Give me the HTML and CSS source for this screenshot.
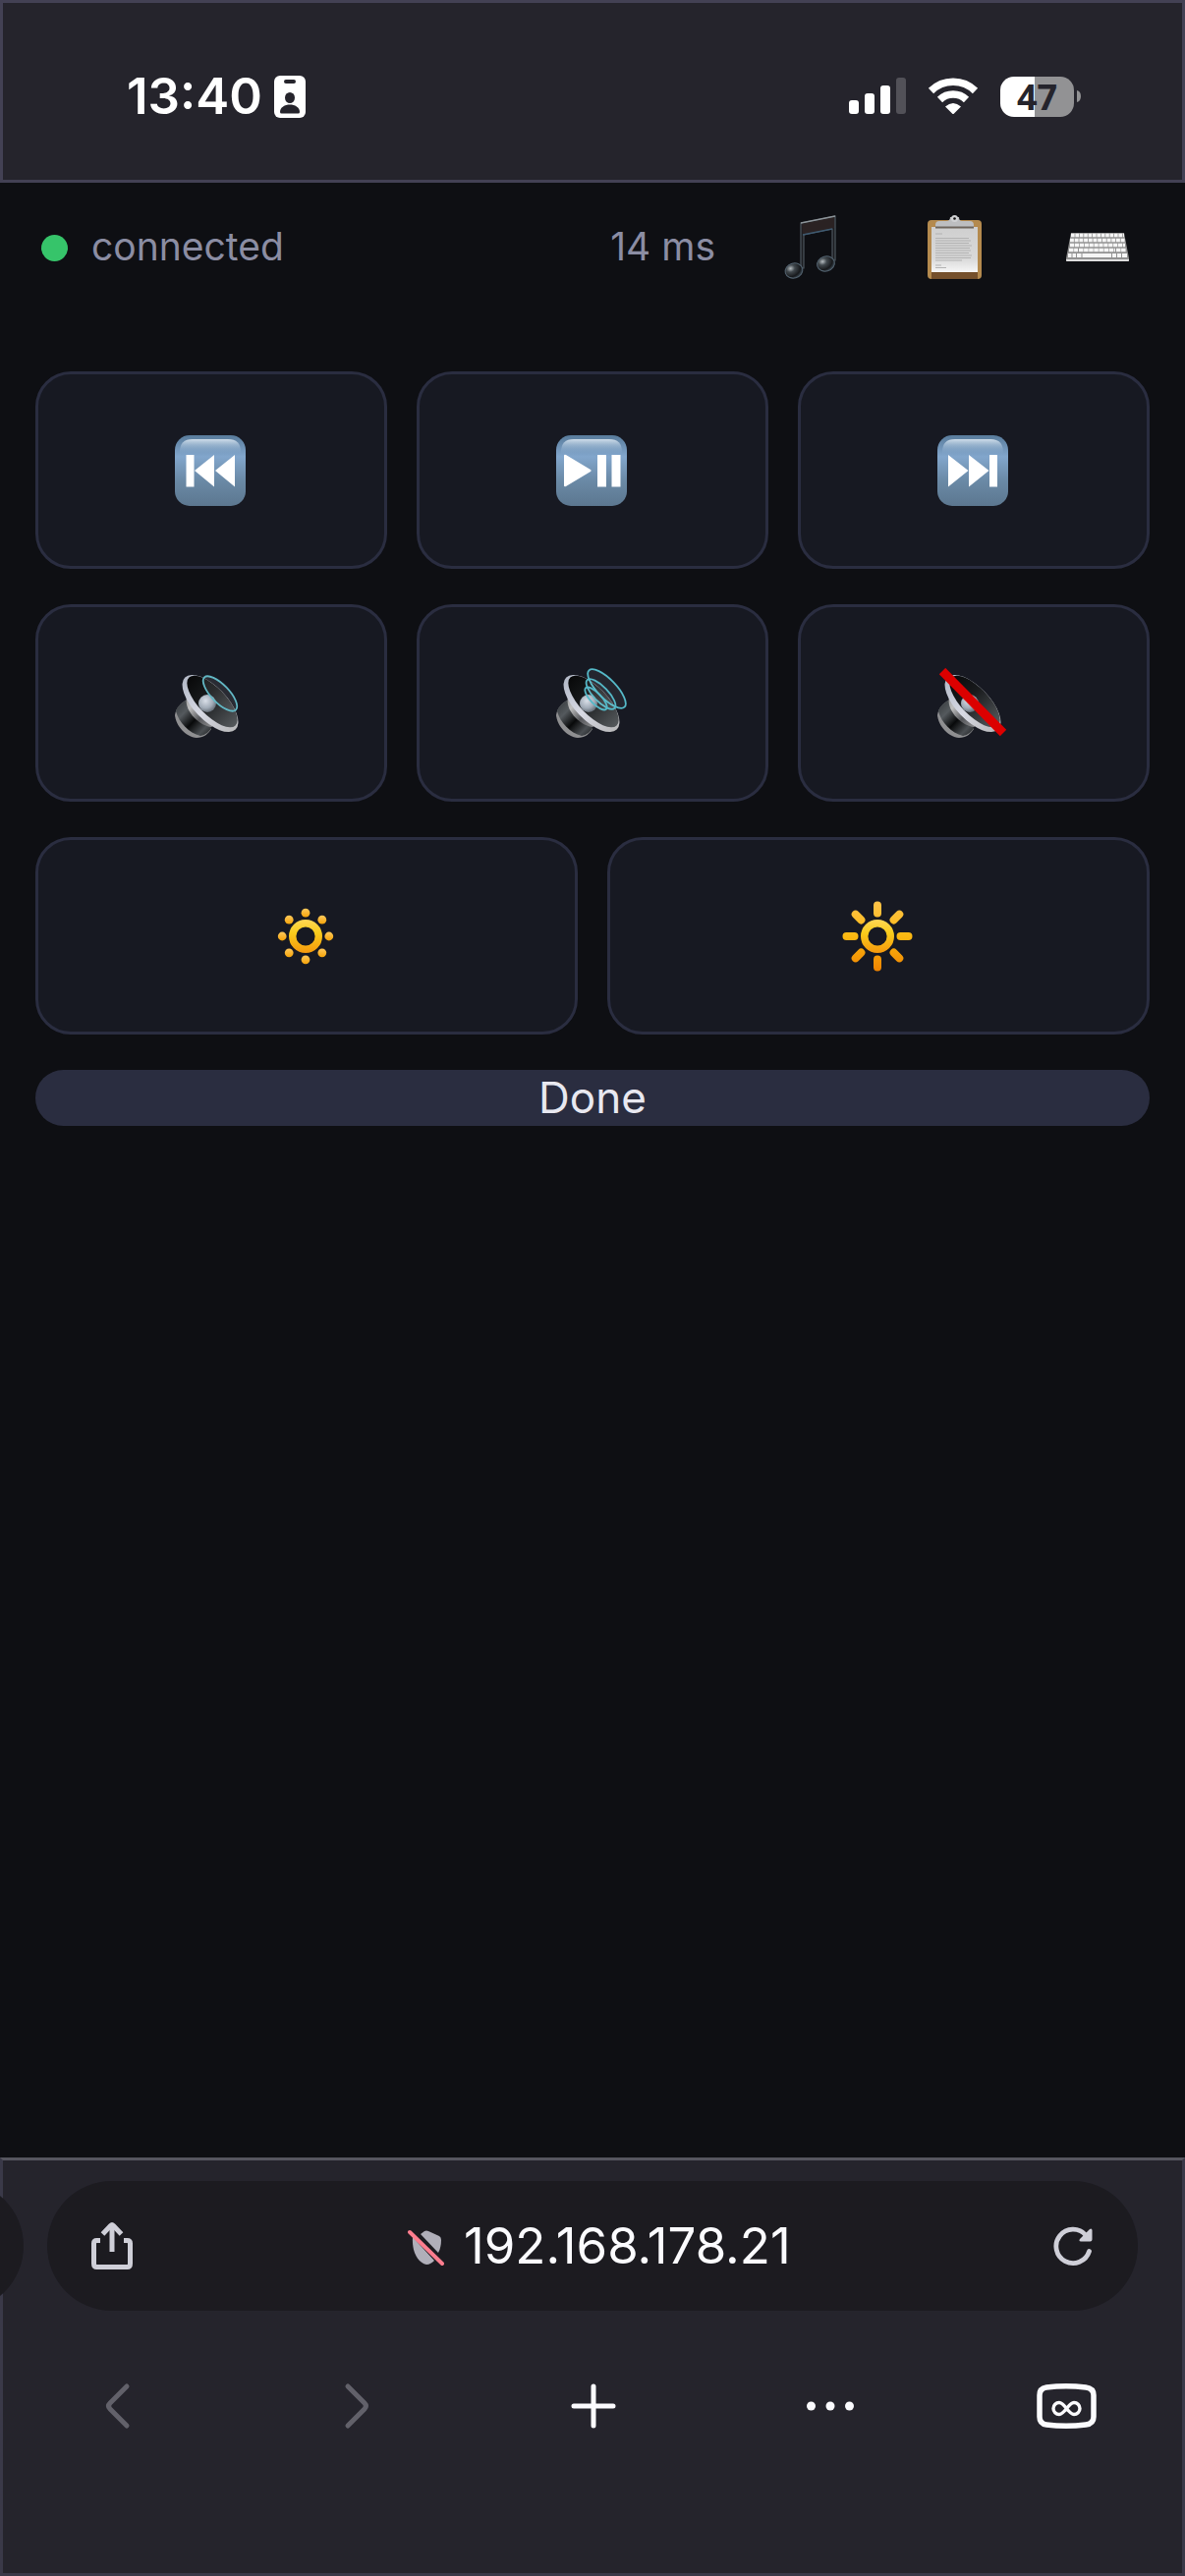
FILE: index.html
```
<!DOCTYPE html>
<html lang="en">
<head>
<meta charset="UTF-8">
<meta name="viewport" content="width=device-width, initial-scale=1.0">
<title>Remote</title>
<link rel="stylesheet" href="styles.css">
</head>
<body>
  <!-- Shared gradients and shapes -->
  <svg class="defs" width="0" height="0" aria-hidden="true">
    <defs>
      <linearGradient id="key" x1="0" y1="0" x2="0" y2="1">
        <stop offset="0" stop-color="#587b9b"/>
        <stop offset=".3" stop-color="#82a6cc"/>
        <stop offset=".65" stop-color="#6a89a5"/>
        <stop offset="1" stop-color="#5c7790"/>
      </linearGradient>
      <linearGradient id="shine" x1="0" y1="0" x2="0" y2="1">
        <stop offset="0" stop-color="#d0deea"/>
        <stop offset="1" stop-color="#82a6cc" stop-opacity="0"/>
      </linearGradient>
      <linearGradient id="rim" x1="0" y1="0" x2="1" y2="0">
        <stop offset="0" stop-color="#b4bac8"/>
        <stop offset=".5" stop-color="#d8dae4"/>
        <stop offset="1" stop-color="#b9b9bb"/>
      </linearGradient>
      <linearGradient id="cone" x1="0" y1="0" x2="1" y2="0">
        <stop offset="0" stop-color="#08090a"/>
        <stop offset=".4" stop-color="#191b1d"/>
        <stop offset="1" stop-color="#55595c"/>
      </linearGradient>
      <linearGradient id="magnet" x1="0" y1="0" x2="1" y2="1">
        <stop offset="0" stop-color="#33373a"/>
        <stop offset=".3" stop-color="#54595d"/>
        <stop offset=".55" stop-color="#08090a"/>
        <stop offset=".8" stop-color="#4a4e52"/>
        <stop offset="1" stop-color="#202224"/>
      </linearGradient>
      <linearGradient id="neck" x1="0" y1="0" x2="1" y2="1">
        <stop offset="0" stop-color="#8a8a8c"/>
        <stop offset=".3" stop-color="#c0c0c0"/>
        <stop offset=".6" stop-color="#55565a"/>
        <stop offset="1" stop-color="#a0a0a2"/>
      </linearGradient>
      <radialGradient id="dome" cx=".4" cy=".35" r=".7">
        <stop offset="0" stop-color="#d9dfe8"/>
        <stop offset=".6" stop-color="#a0aab6"/>
        <stop offset="1" stop-color="#5b636c"/>
      </radialGradient>
      <linearGradient id="sun" gradientUnits="userSpaceOnUse" x1="0" y1="18" x2="0" y2="54">
        <stop offset="0" stop-color="#ffd85a"/>
        <stop offset=".4" stop-color="#f9cc1c"/>
        <stop offset="1" stop-color="#f5960c"/>
      </linearGradient>
      <linearGradient id="ray" gradientUnits="userSpaceOnUse" x1="0" y1="0" x2="0" y2="72">
        <stop offset="0" stop-color="#ffc34a"/>
        <stop offset=".5" stop-color="#fbb911"/>
        <stop offset="1" stop-color="#ef8200"/>
      </linearGradient>
      <linearGradient id="spark" x1="0" y1="0" x2="0" y2="1">
        <stop offset="0" stop-color="#ffc95c"/>
        <stop offset="1" stop-color="#f5a308"/>
      </linearGradient>
      <linearGradient id="paper" x1="0" y1="0" x2="0" y2="1">
        <stop offset="0" stop-color="#cfcfcf"/>
        <stop offset=".7" stop-color="#d9d9d9"/>
        <stop offset="1" stop-color="#f6f6f6"/>
      </linearGradient>
      <radialGradient id="bead" cx=".35" cy=".3" r=".8">
        <stop offset="0" stop-color="#b5bcc0"/>
        <stop offset=".3" stop-color="#41484d"/>
        <stop offset=".7" stop-color="#17191c"/>
        <stop offset="1" stop-color="#4b5c69"/>
      </radialGradient>
      <g id="keycap">
        <rect width="72" height="72" rx="15" fill="url(#key)"/>
        <path d="M5 20V17Q5 4 18 4H54Q67 4 67 17V20Z" fill="url(#shine)"/>
      </g>
      <g id="speaker">
        <path d="M13 32C5 36 1 41 0 48C1 59 11 70 22 71C29 71 34 67 37 62Z" fill="#8f8f91"/>
        <path d="M13 32C5 36 2 40 1 44C4 55 14 66 26 69C31 68 35 65 37 61Z" fill="url(#magnet)"/>
        <path d="M12 30C9 41 22 58 37 60L44 56L20 22Z" fill="url(#neck)"/>
        <ellipse cx="36" cy="36" rx="37" ry="17" transform="rotate(46 36 36)" fill="url(#rim)"/>
        <ellipse cx="38" cy="34" rx="34" ry="14" transform="rotate(46 38 34)" fill="url(#cone)"/>
        <circle cx="33" cy="36" r="9" fill="url(#dome)"/>
      </g>
    </defs>
  </svg>

  <div class="status-bar">
    <div class="status-left">
      <span class="time">13:40</span>
      <svg width="32" height="43" viewBox="0 0 32 43">
        <rect width="32" height="43" rx="6" fill="#fff"/>
        <rect x="10" y="4" width="12" height="4" rx="2" fill="#25242c"/>
        <ellipse cx="16" cy="22.500" rx="5" ry="5.500" fill="#25242c"/>
        <path d="M6 37C6 32 11 29.500 16 29.500S26 32 26 37Q26 38.500 24.500 38.500H7.500Q6 38.500 6 37Z" fill="#25242c"/>
      </svg>
    </div>
    <div class="status-right">
      <svg width="58" height="38" viewBox="0 0 58 38" fill="#fff">
        <rect y="23" width="10" height="14" rx="3"/>
        <rect x="16" y="16" width="10" height="21" rx="3"/>
        <rect x="32" y="8" width="10" height="29" rx="3"/>
        <rect x="48" width="10" height="37" rx="3" fill="#525158"/>
      </svg>
      <svg width="52" height="38" viewBox="0 0 52 38" fill="none" stroke="#fff" stroke-width="7.500">
        <path d="M3.500 13.500A32 32 0 0 1 48.500 13.500"/>
        <path d="M12.500 22.500A19.500 19.500 0 0 1 39.500 22.500"/>
        <path d="M18 29.500Q26 22.500 34 29.500L27 36.500Q26 37.500 25 36.500Z" fill="#fff" stroke="none"/>
      </svg>
      <div class="battery">
        <span class="battery-level">47</span>
        <svg width="4" height="12" viewBox="0 0 4 12"><path d="M0 0Q4 1 4 6T0 12Z" fill="#929294"/></svg>
      </div>
    </div>
  </div>

  <header class="header">
    <span class="dot"></span>
    <span class="state">connected</span>
    <span class="latency">14 ms</span>
    <button class="tool" aria-label="Media">
      <svg width="66" height="66" viewBox="0 0 66 66">
        <path d="M23 8L58 1V46H55V14L26 20V54H23Z" fill="#1b1d21" stroke="#4d565e" stroke-width="1.200"/>
        <path d="M24 9L57 2V13L25 20Z" fill="#2a2223"/>
        <path d="M23 8L58 1" stroke="#8d9499" stroke-width="1.500"/>
        <path d="M25 20L55 14" stroke="#3e5a70" stroke-width="1.500"/>
        <ellipse cx="16" cy="56.500" rx="9" ry="7.500" transform="rotate(-15 16 56.500)" fill="url(#bead)" stroke="#536370"/>
        <ellipse cx="48.500" cy="49.500" rx="9" ry="7.500" transform="rotate(-15 48.500 49.500)" fill="url(#bead)" stroke="#536370"/>
      </svg>
    </button>
    <button class="tool" aria-label="Clipboard">
      <svg width="66" height="66" viewBox="0 0 66 66">
        <rect x="6" y="5" width="55" height="60" rx="4" fill="#b48a4e"/>
        <rect x="10" y="57" width="47" height="8" fill="#75502c"/>
        <rect x="10" y="12" width="47" height="46" fill="url(#paper)"/>
        <path d="M14 13V10Q14 6 18 6H25Q29 6 29 2H38Q38 6 41 6H49Q53 6 53 10V13Z" fill="#bdbec0"/>
        <path d="M14 12.500H53" stroke="#6f665e" stroke-width="2"/>
        <circle cx="33.500" cy="3.500" r="3.500" fill="#d0d1d3"/>
        <circle cx="33.500" cy="3.500" r="1.300" fill="#111"/>
        <g stroke="#b2b2b2" stroke-width="1.200">
          <path d="M14 19H21M14 23.500H48M14 26H50M14 28.500H48M14 31H51M14 33.500H49M14 36H50M14 38.500H48M14 41H51M14 43.500H50M14 46H41M14 51H20M14 53.500H25"/>
        </g>
      </svg>
    </button>
    <button class="tool" aria-label="Keyboard">
      <svg width="66" height="66" viewBox="0 0 66 66">
        <path d="M6 18H60L65 44V46Q65 47 64 47H2Q1 47 1 46V44Z" fill="#929292"/>
        <path d="M1 45H65V46Q65 47 64 47H2Q1 47 1 46Z" fill="#dedede"/>
        <g fill="none" stroke="#f5f5f5" stroke-width="3.300">
          <path d="M6 20.500H60" stroke-dasharray="3.600 .8"/>
          <path d="M5 25.500H61" stroke-dasharray="3.900 .8"/>
          <path d="M5 30.500H61" stroke-dasharray="4.200 .7"/>
          <path d="M4 35.500H13M14 35.500H51M52 35.500H62" stroke-dasharray="4.500 .6"/>
          <path d="M3 41H6.500M7.500 41H11M12 41H16.500M17.500 41H47M48 41H52M53 41H57M58 41H63" stroke-width="4"/>
        </g>
      </svg>
    </button>
  </header>

  <main class="panel">
    <div class="row">
      <button class="key" aria-label="Previous track">
        <svg width="72" height="72" viewBox="0 0 72 72">
          <use href="#keycap"/>
          <path d="M11.500 20H19.500V52.500H11.500ZM20 36L40 20V52.500ZM41 36L61 20V52.500Z" fill="#fff"/>
        </svg>
      </button>
      <button class="key" aria-label="Play or pause">
        <svg width="72" height="72" viewBox="0 0 72 72">
          <use href="#keycap"/>
          <path d="M8 21Q8 19 10 20L35 35Q36.500 36 35 37L10 52Q8 53 8 51ZM42 20H51V52.500H42ZM56.500 20H65.500V52.500H56.500Z" fill="#fff"/>
        </svg>
      </button>
      <button class="key" aria-label="Next track">
        <svg width="72" height="72" viewBox="0 0 72 72">
          <use href="#keycap"/>
          <path d="M11 20L31.500 36L11 52.500ZM32 20L52.500 36L32 52.500ZM53 20H61V52.500H53Z" fill="#fff"/>
        </svg>
      </button>
    </div>

    <div class="row">
      <button class="key" aria-label="Volume down">
        <svg width="72" height="72" viewBox="0 0 72 72">
          <use href="#speaker"/>
          <ellipse cx="46" cy="26" rx="23" ry="9" transform="rotate(46 46 26)" fill="#fff" fill-opacity=".08" stroke="#62b7c4" stroke-width="1.800"/>
        </svg>
      </button>
      <button class="key" aria-label="Volume up">
        <svg width="72" height="72" viewBox="0 0 72 72">
          <use href="#speaker"/>
          <g fill="#fff" fill-opacity=".06" stroke="#55b9c8" stroke-width="1.800">
            <ellipse cx="51.500" cy="21" rx="26" ry="9.500" transform="rotate(46 51.500 21)"/>
            <ellipse cx="45.500" cy="26.500" rx="20" ry="7.500" transform="rotate(46 45.500 26.500)"/>
            <ellipse cx="40.500" cy="31" rx="15" ry="5.500" transform="rotate(46 40.500 31)"/>
          </g>
        </svg>
      </button>
      <button class="key" aria-label="Mute">
        <svg width="72" height="72" viewBox="0 0 72 72">
          <use href="#speaker"/>
          <path d="M5 3L67 66" stroke="#dc0000" stroke-width="9"/>
        </svg>
      </button>
    </div>

    <div class="row">
      <button class="key" aria-label="Brightness down">
        <svg width="72" height="72" viewBox="0 0 72 72">
          <circle cx="36" cy="36" r="13.300" fill="none" stroke="url(#sun)" stroke-width="7.400"/>
          <g fill="url(#spark)">
            <circle cx="36" cy="12.200" r="4.400"/>
            <circle cx="36" cy="59.800" r="4.400"/>
            <circle cx="12.200" cy="36" r="4.400"/>
            <circle cx="59.800" cy="36" r="4.400"/>
            <circle cx="19.200" cy="19.200" r="4.400"/>
            <circle cx="52.800" cy="19.200" r="4.400"/>
            <circle cx="19.200" cy="52.800" r="4.400"/>
            <circle cx="52.800" cy="52.800" r="4.400"/>
          </g>
        </svg>
      </button>
      <button class="key" aria-label="Brightness up">
        <svg width="72" height="72" viewBox="0 0 72 72">
          <circle cx="36" cy="36" r="13.300" fill="none" stroke="url(#sun)" stroke-width="7.400"/>
          <path d="M36 4.500V12.500M36 59.500V67.500M4.500 36H12.500M59.500 36H67.500M13.700 13.700L19.400 19.400M52.600 52.600L58.300 58.300M13.700 58.300L19.400 52.600M52.600 19.400L58.300 13.700" fill="none" stroke="url(#ray)" stroke-width="8" stroke-linecap="round"/>
        </svg>
      </button>
    </div>

    <button class="done">Done</button>
  </main>

  <footer class="browser-bar">
    <span class="prev-tab"></span>
    <div class="address">
      <button class="address-btn" aria-label="Share">
        <svg width="48" height="48" viewBox="0 0 48 48" fill="none" stroke="#cfcfd8" stroke-width="5">
          <path d="M12 18.500H8.500Q5.500 18.500 5.500 21.500V42Q5.500 45.500 8.500 45.500H39.500Q42.500 45.500 42.500 42V21.500Q42.500 18.500 39.500 18.500H36"/>
          <path d="M24 30V4"/>
          <path d="M14.500 12L22.500 3.500Q24 2 25.500 3.500L33.500 12"/>
        </svg>
      </button>
      <label class="site">
        <svg width="48" height="48" viewBox="0 0 48 48">
          <path d="M10 15L32 39C30 41 27 43 24 43C15 41 9 30 10 15Z" fill="#b0afb9"/>
          <path d="M18 12L22 9Q24 8 26 9L37 14Q39 15 39 18Q39 26 36 31Z" fill="#b0afb9"/>
          <path d="M7 10L40 42" stroke="#ff7d8e" stroke-width="4" stroke-linecap="round"/>
        </svg>
        <input class="url" type="text" value="192.168.178.21" aria-label="Address">
      </label>
      <button class="address-btn" aria-label="Reload">
        <svg width="48" height="48" viewBox="0 0 48 48">
          <path d="M40.500 29.500A17.200 17.200 0 1 1 37 13" fill="none" stroke="#cfcfd8" stroke-width="4.800" stroke-linecap="round"/>
          <path d="M43.500 8V17.500Q43.500 19.500 41.500 19.500H32Q29.500 19 31 17L41 7Q43 5.500 43.500 8Z" fill="#cfcfd8"/>
        </svg>
      </button>
    </div>
    <nav class="nav">
      <button class="nav-btn" aria-label="Back">
        <svg width="72" height="72" viewBox="0 0 72 72" fill="none" stroke="#62616a" stroke-width="5" stroke-linecap="round">
          <path d="M44 16L27 33Q24 36 27 39L44 56"/>
        </svg>
      </button>
      <button class="nav-btn" aria-label="Forward">
        <svg width="72" height="72" viewBox="0 0 72 72" fill="none" stroke="#62616a" stroke-width="5" stroke-linecap="round">
          <path d="M28 16L45 33Q48 36 45 39L28 56"/>
        </svg>
      </button>
      <button class="nav-btn" aria-label="New tab">
        <svg width="72" height="72" viewBox="0 0 72 72" fill="none" stroke="#fbfbfe" stroke-width="5" stroke-linecap="round">
          <path d="M37 16V56M17 36H57"/>
        </svg>
      </button>
      <button class="nav-btn" aria-label="Menu">
        <svg width="72" height="72" viewBox="0 0 72 72" fill="#fbfbfe">
          <circle cx="17.500" cy="36" r="4.500"/>
          <circle cx="37" cy="36" r="4.500"/>
          <circle cx="56.500" cy="36" r="4.500"/>
        </svg>
      </button>
      <button class="nav-btn" aria-label="Tabs">
        <svg width="72" height="72" viewBox="0 0 72 72" fill="none" stroke="#fbfbfe">
          <path d="M16 17Q36 14.500 56 17Q64 18 64 25V47Q64 54 56 55Q36 57.500 16 55Q9 54 9 47V25Q9 18 16 17Z" stroke-width="5.500"/>
          <path d="M36.500 38.500C33 34 31.500 32.500 29 32.500A6 6 0 0 0 29 44.500C31.500 44.500 33 43 36.500 38.500C40 34 41.500 32.500 44 32.500A6 6 0 0 1 44 44.500C41.500 44.500 40 43 36.500 38.500Z" stroke-width="3.400"/>
        </svg>
      </button>
    </nav>
  </footer>
</body>
</html>
```

FILE: styles.css
```
* {
  box-sizing: border-box;
}

body {
  margin: 0;
  min-height: 100vh;
  display: flex;
  flex-direction: column;
  background: #0e0f13;
  color: #e8e8f0;
  font-family: Inter, "Liberation Sans", sans-serif;
}

button {
  margin: 0;
  padding: 0;
  border: none;
  background: none;
  color: inherit;
  font-family: inherit;
  cursor: pointer;
}

svg {
  display: block;
  flex: none;
}

.defs {
  position: absolute;
}

/* Phone status bar */
.status-bar {
  display: flex;
  justify-content: space-between;
  align-items: center;
  height: 186px;
  padding: 10px 103px 0 126px;
  border: 3px solid #434154;
  background: #25242c;
  color: #fff;
}

.status-left,
.status-right {
  display: flex;
  align-items: center;
}

.status-left {
  gap: 12px;
}

.status-right {
  gap: 22px;
}

.time {
  font-size: 51px;
  font-weight: 600;
  line-height: 60px;
}

.battery {
  display: flex;
  align-items: center;
  gap: 3px;
}

.battery-level {
  width: 75px;
  border-radius: 14px;
  background: linear-gradient(to right, #fff 47%, #929294 47%);
  color: #25242c;
  font-family: "Noto Sans", sans-serif;
  font-size: 36px;
  font-weight: 700;
  line-height: 41px;
  text-align: center;
}

/* Connection header */
.header {
  display: flex;
  align-items: center;
  gap: 24px;
  height: 132px;
  padding: 0 28px 0 42px;
  color: #8b8da3;
  font-size: 39px;
  line-height: 48px;
}

.dot {
  width: 27px;
  height: 27px;
  border-radius: 50%;
  background: #36c46a;
}

.state,
.latency {
  padding-bottom: 2px;
}

.state {
  flex: 1;
}

.latency {
  margin-right: 12px;
}

.tool {
  display: flex;
  justify-content: center;
  width: 122px;
}

/* Media keys */
.panel {
  flex: 1;
  display: flex;
  flex-direction: column;
  gap: 36px;
  padding: 60px 36px;
}

.row {
  display: flex;
  gap: 30px;
}

.key {
  flex: 1;
  display: flex;
  align-items: center;
  justify-content: center;
  height: 201px;
  padding-right: 2px;
  border: 3px solid #2a2d40;
  border-radius: 36px;
  background: #171922;
}

.done {
  border-radius: 30px;
  background: #2a2d40;
  font-size: 44px;
  line-height: 57px;
}

/* Browser toolbar */
.browser-bar {
  position: relative;
  height: 426px;
  padding: 21px 45px;
  border: 3px solid #3a3948;
  border-top-color: #56565f;
  background: #25242c;
}

/* Edge of the neighbouring tab, peeks in from the left */
.prev-tab {
  position: absolute;
  top: 21px;
  left: -3px;
  width: 24px;
  height: 132px;
  overflow: hidden;
}

.prev-tab::before {
  content: "";
  position: absolute;
  right: 0;
  width: 132px;
  height: 132px;
  border-radius: 50%;
  background: #1c1b20;
}

.address {
  display: flex;
  align-items: center;
  justify-content: space-between;
  height: 132px;
  padding: 0 42px;
  border-radius: 66px;
  background: #1c1b20;
}

.site {
  display: flex;
  align-items: center;
  gap: 14px;
  padding-left: 12px;
}

.url {
  width: 336px;
  padding: 0;
  border: none;
  outline: none;
  background: none;
  color: #fbfbfe;
  font-family: inherit;
  font-size: 51px;
  line-height: 60px;
}

.nav {
  display: grid;
  grid-template-columns: repeat(5, 1fr);
  margin: 61px -48px 0;
}

.nav-btn {
  display: flex;
  justify-content: center;
}
```
